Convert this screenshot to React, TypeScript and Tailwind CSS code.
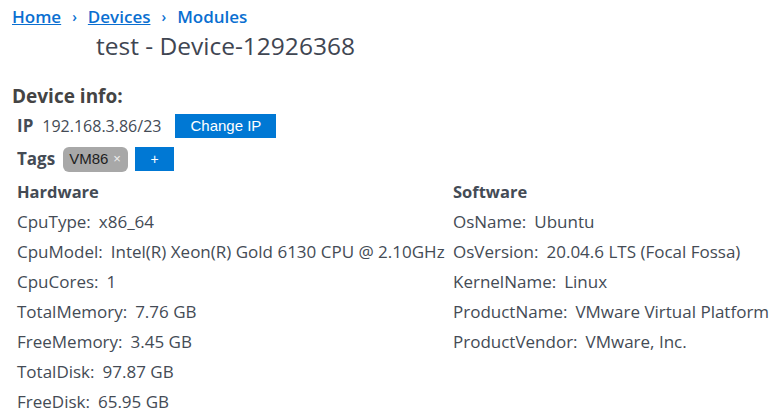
import React from "react";

const hw: [string, string][] = [
  ["CpuType:", "x86_64"],
  ["CpuModel:", "Intel(R) Xeon(R) Gold 6130 CPU @ 2.10GHz"],
  ["CpuCores:", "1"],
  ["TotalMemory:", "7.76 GB"],
  ["FreeMemory:", "3.45 GB"],
  ["TotalDisk:", "97.87 GB"],
  ["FreeDisk:", "65.95 GB"],
];
const sw: [string, string][] = [
  ["OsName:", "Ubuntu"],
  ["OsVersion:", "20.04.6 LTS (Focal Fossa)"],
  ["KernelName:", "Linux"],
  ["ProductName:", "VMware Virtual Platform"],
  ["ProductVendor:", "VMware, Inc."],
];

function Col({ title, rows }: { title: string; rows: [string, string][] }) {
  return (
    <div className="flex flex-col">
      <div className="h-[30px] leading-[30px] font-bold text-[16.5px]">{title}</div>
      {rows.map(([k, v]) => (
        <div key={k} className="h-[30px] leading-[30px] text-[17px] whitespace-nowrap">
          {k}
          <span className="ml-[8px]">{v}</span>
        </div>
      ))}
    </div>
  );
}

export default function App() {
  return (
    <div
      className="w-[775px] h-[417px] bg-white text-[#444b55] overflow-hidden"
      style={{ fontFamily: '"Open Sans", "Noto Sans", sans-serif' }}
    >
      <div className="pl-[12px] pt-[7px] flex items-center text-[17px] font-semibold text-[#0a6fd1] h-[26px]">
        <a className="underline">Home</a>
        <span className="mx-[11px] text-[14px]">›</span>
        <a className="underline">Devices</a>
        <span className="mx-[11px] text-[14px]">›</span>
        <span>Modules</span>
      </div>
      <div className="pl-[96px] mt-[3px] h-[33px] leading-[33px] text-[24.5px] text-[#3f4652]">
        test - Device-12926368
      </div>
      <div className="pl-[12px] mt-[20px] h-[28px] leading-[28px] text-[19px] font-bold text-[#444]">
        Device info:
      </div>
      <div className="pl-[17px] mt-[3px] flex items-center h-[26px]">
        <span className="font-bold text-[17px]">IP</span>
        <span className="ml-[9px] text-[16px]">192.168.3.86/23</span>
        <button
          className="ml-[14px] w-[101px] h-[24px] bg-[#0078d4] text-white text-[15px]"
          style={{ fontFamily: '"Liberation Sans", Arial, sans-serif' }}
        >
          Change IP
        </button>
      </div>
      <div className="pl-[17px] mt-[7px] flex items-center h-[26px]">
        <span className="font-bold text-[17px]">Tags</span>
        <span
          className="ml-[8px] h-[25px] w-[65px] rounded-[6px] bg-[#a8a8a8] flex items-center pl-[6px] text-[15px] text-[#1e1e1e]"
          style={{ fontFamily: '"Liberation Sans", Arial, sans-serif' }}
        >
          VM86<span className="ml-[5px] text-[13px] text-[#eeeeee]">×</span>
        </span>
        <button
          className="ml-[7px] w-[39px] h-[24px] bg-[#0078d4] text-white text-[14px]"
          style={{ fontFamily: '"Liberation Sans", Arial, sans-serif' }}
        >
          +
        </button>
      </div>
      <div className="pl-[17px] mt-[5px] flex">
        <div className="w-[436px]">
          <Col title="Hardware" rows={hw} />
        </div>
        <Col title="Software" rows={sw} />
      </div>
    </div>
  );
}
